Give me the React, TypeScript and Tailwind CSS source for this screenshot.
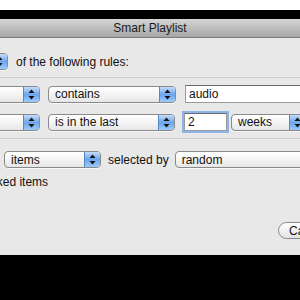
import React from "react";

function Arrows() {
  return (
    <svg width="7" height="11" viewBox="0 0 7 11" className="block">
      <path d="M3.5 0.5 L6.5 4 L0.5 4 Z" fill="#111" />
      <path d="M3.5 10.5 L6.5 7 L0.5 7 Z" fill="#111" />
    </svg>
  );
}

function Popup({ label, className }: { label?: string; className: string }) {
  return (
    <div
      className={
        "h-[17px] shrink-0 flex rounded-[4px] border border-[#8a8a8a] overflow-hidden bg-gradient-to-b from-white via-[#f4f4f4] to-[#e6e6e6] shadow-[0_1px_0_rgba(255,255,255,0.6)] " +
        className
      }
    >
      <div className="flex-1 flex items-center pl-[6px] leading-none whitespace-nowrap">{label}</div>
      <div className="w-[16px] shrink-0 flex items-center justify-center border-l border-[#5b86c4] bg-gradient-to-b from-[#c4dcf8] via-[#6ca6ee] to-[#9ccaf9]">
        <Arrows />
      </div>
    </div>
  );
}

function Field({ value, className }: { value: string; className: string }) {
  return (
    <div
      className={
        "h-[18px] shrink-0 flex items-center bg-white border border-[#9a9a9a] border-t-[#6b6b6b] pl-[3px] leading-none " +
        className
      }
    >
      {value}
    </div>
  );
}

export default function App() {
  return (
    <div className="w-[300px] h-[300px] overflow-hidden bg-black flex flex-col font-['Liberation_Sans',Arial,sans-serif] text-[12px] text-[#111]">
      <div className="h-[10px] bg-white shrink-0" />
      <div className="h-[9px] bg-black shrink-0" />

      {/* title bar */}
      <div className="h-[19px] shrink-0 flex items-center justify-center bg-gradient-to-b from-[#d6d6d6] to-[#a6a6a6] border-b border-[#7c7c7c] text-[12px] text-[#1a1a1a]">
        Smart Playlist
      </div>

      {/* body */}
      <div className="h-[217px] shrink-0 bg-[#e8e8e8] flex flex-col pt-[15px]">
        <div className="h-[17px] flex items-center gap-[8px]">
          <Popup className="w-[50px] ml-[-42px]" />
          <span className="whitespace-nowrap">of the following rules:</span>
        </div>

        <div className="mt-[7px] h-px bg-[#cdcdcd]" />

        <div className="mt-[7px] h-[18px] flex items-center">
          <Popup className="w-[80px] ml-[-40px]" />
          <Popup className="w-[128px] ml-[8px]" label="contains" />
          <Field className="w-[130px] ml-[9px]" value="audio" />
        </div>

        <div className="mt-[10px] h-[18px] flex items-center">
          <Popup className="w-[80px] ml-[-40px]" />
          <Popup className="w-[127px] ml-[8px]" label="is in the last" />
          <Field
            className="w-[43px] ml-[9px] border-[#6d8fc2] shadow-[0_0_0_2px_#8db3e8]"
            value="2"
          />
          <Popup className="w-[75px] ml-[4px]" label="weeks" />
        </div>

        <div className="mt-[7px] h-px bg-[#cdcdcd]" />

        <div className="mt-[12px] h-[17px] flex items-center">
          <Popup className="w-[97px] ml-[4px]" label="items" />
          <span className="ml-[7px] shrink-0 whitespace-nowrap">selected by</span>
          <Popup className="w-[150px] ml-[6px]" label="random" />
        </div>

        <div className="mt-[7px] h-[14px] flex items-center">
          <span className="ml-[-90px] shrink-0 whitespace-nowrap">Match only checked items</span>
        </div>

        <div className="mt-[33px] h-[17px] flex items-center">
          <div className="ml-[278px] w-[72px] h-[17px] shrink-0 rounded-full border border-[#8a8a8a] bg-gradient-to-b from-white via-[#f2f2f2] to-[#e2e2e2] flex items-center pl-[10px] leading-none">
            Cancel
          </div>
        </div>
      </div>
    </div>
  );
}
